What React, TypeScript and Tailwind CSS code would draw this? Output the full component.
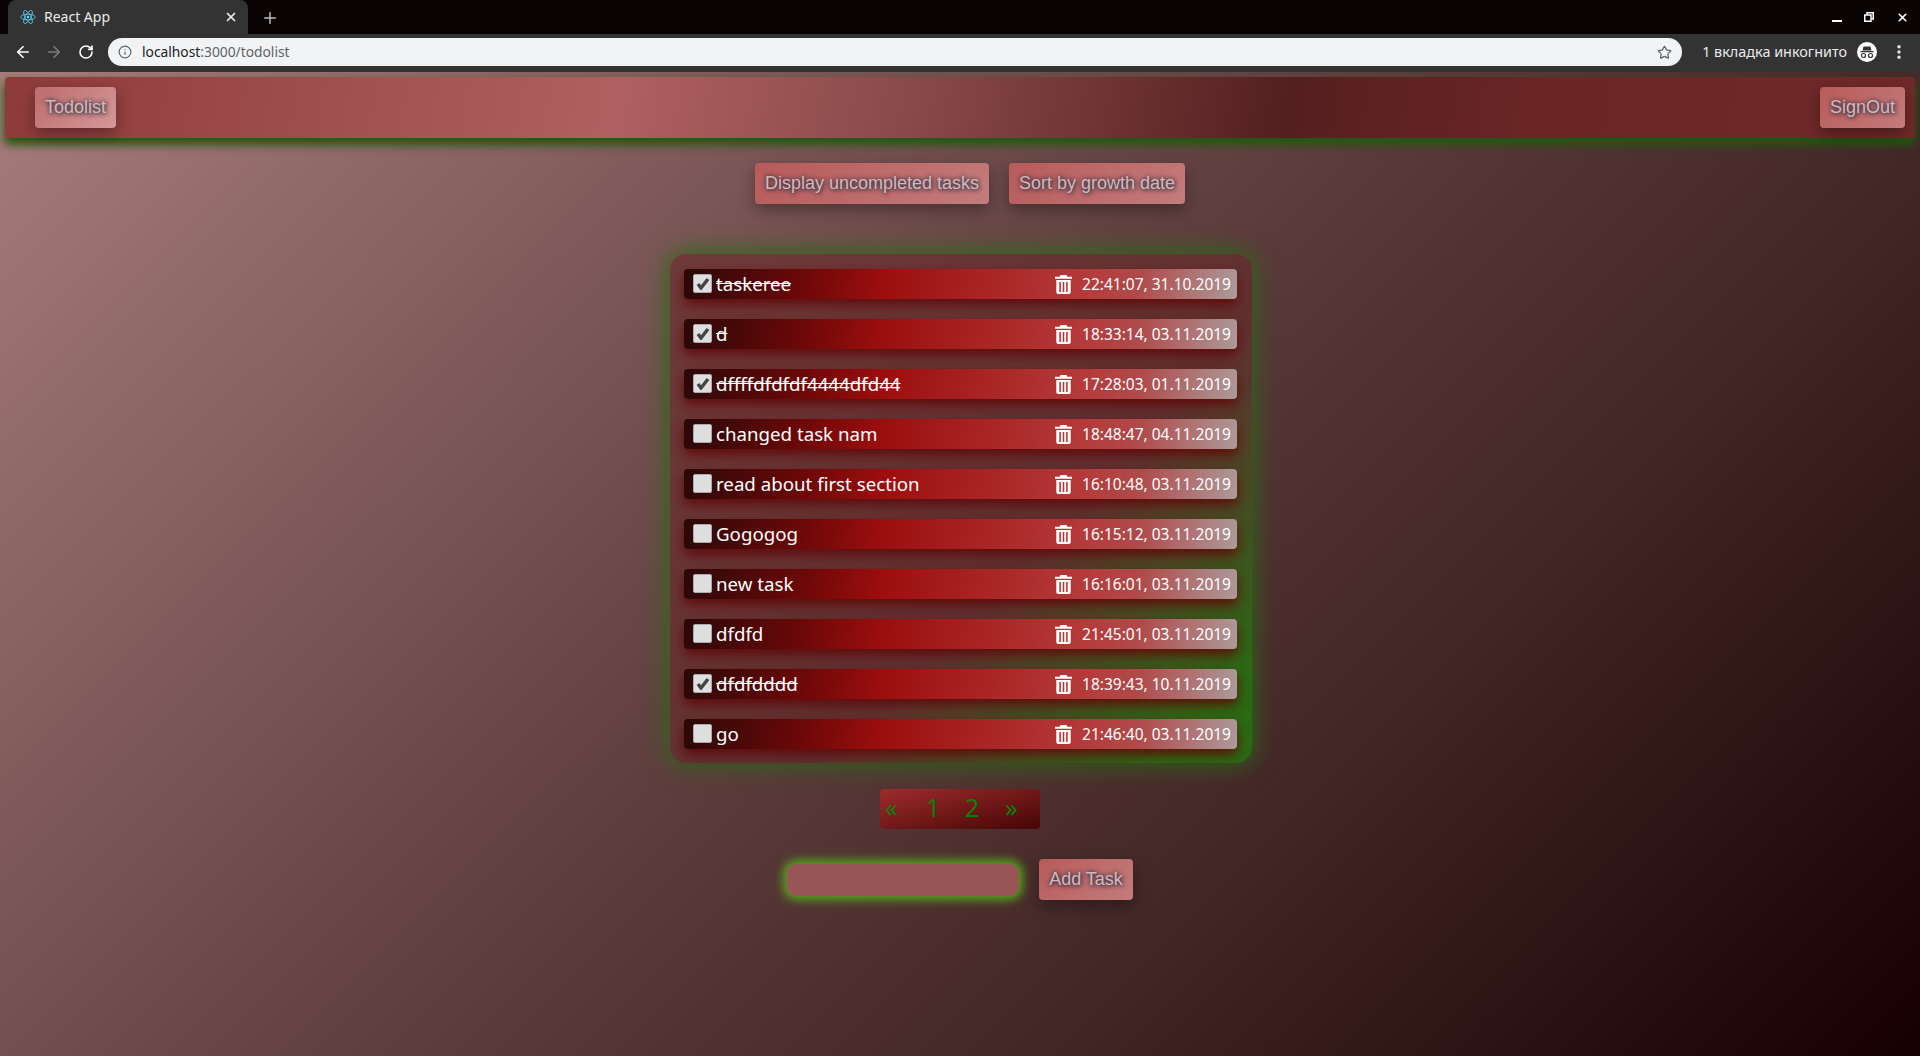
import { ArrowLeft, ArrowRight, Info, MoreVertical, Plus, RotateCw, Star, X } from 'lucide-react'

const tasks = [
  { title: 'taskeree', date: '22:41:07, 31.10.2019', done: true },
  { title: 'd', date: '18:33:14, 03.11.2019', done: true },
  { title: 'dffffdfdfdf4444dfd44', date: '17:28:03, 01.11.2019', done: true },
  { title: 'changed task nam', date: '18:48:47, 04.11.2019', done: false },
  { title: 'read about first section', date: '16:10:48, 03.11.2019', done: false },
  { title: 'Gogogog', date: '16:15:12, 03.11.2019', done: false },
  { title: 'new task', date: '16:16:01, 03.11.2019', done: false },
  { title: 'dfdfd', date: '21:45:01, 03.11.2019', done: false },
  { title: 'dfdfdddd', date: '18:39:43, 10.11.2019', done: true },
  { title: 'go', date: '21:46:40, 03.11.2019', done: false },
]

const btn =
  "h-[41px] px-[10px] rounded-[4px] font-['Liberation_Sans',sans-serif] text-[18px] text-[#d2b8bc] [text-shadow:0_0_5px_#334,1px_1px_4px_#334] shadow-[0_6px_16px_rgba(0,0,0,0.35)]"
const btnBg = 'bg-[linear-gradient(135deg,#b85a5a,#c47c7c)]'

const ReactLogo = () => (
  <svg width="16" height="16" viewBox="-12 -12 24 24" fill="none" stroke="#61dafb" strokeWidth="1.1">
    <circle r="2" fill="#61dafb" stroke="none" />
    <ellipse rx="11" ry="4.2" />
    <ellipse rx="11" ry="4.2" transform="rotate(60)" />
    <ellipse rx="11" ry="4.2" transform="rotate(120)" />
  </svg>
)

const Trash = () => (
  <svg width="17" height="19" viewBox="0 0 17 19" fill="#fff">
    <path d="M5.500 0h6l.8 1.700h4.700v2.100H0V1.700h4.700z" />
    <path
      fillRule="evenodd"
      d="M1.300 5h14.400v12.200a1.800 1.800 0 0 1-1.800 1.800H3.100a1.800 1.800 0 0 1-1.800-1.800zM4.300 7v10h1.600V7zM7.700 7v10h1.600V7zM11.100 7v10h1.600V7z"
    />
  </svg>
)

const Incognito = () => (
  <svg width="20" height="20" viewBox="0 0 20 20">
    <circle cx="10" cy="10" r="10" fill="#fff" />
    <path d="M6.500 4.500h7l1 4h-9zM3.500 9h13v1.200h-13z" fill="#333" />
    <circle cx="6.500" cy="13.500" r="2" fill="none" stroke="#333" strokeWidth="1.200" />
    <circle cx="13.500" cy="13.500" r="2" fill="none" stroke="#333" strokeWidth="1.200" />
  </svg>
)

const BrowserChrome = () => (
  <div className="font-['Noto_Sans',sans-serif]">
    <div className="h-[34px] bg-[#0a0304] flex items-end pl-2">
      <div className="h-[34px] w-[240px] bg-[#333333] rounded-t-[8px] flex items-center pl-[12px] pr-[10px] pb-[1px] text-[14px]">
        <ReactLogo />
        <span className="ml-[8px] flex-1 text-[#e8eaed]">React App</span>
        <X size={14} strokeWidth={3} className="text-[#e8eaed]" />
      </div>
      <Plus size={18} strokeWidth={2} className="text-[#bdbdbd] ml-[13px] mb-[7px]" />
      <div className="ml-auto flex items-center gap-[22px] h-[34px] pr-[11px] text-white">
        <div className="w-[10px] h-[2px] bg-white mt-[7px]" />
        <svg width="10" height="10" viewBox="0 0 10 10" fill="none" stroke="#fff" strokeWidth="1.500">
          <path d="M3 2.500V.750h6.250V7H7.500" />
          <rect x=".750" y="3" width="6.250" height="6.250" />
        </svg>
        <X size={13} strokeWidth={3} />
      </div>
    </div>
    <div className="h-[38px] bg-[#333333] flex items-center pl-[14px] pr-[12px] pb-[2px]">
      <ArrowLeft size={18} strokeWidth={2.200} className="text-white" />
      <ArrowRight size={18} strokeWidth={2.200} className="text-[#7c7c7c] ml-[13px]" />
      <RotateCw size={16} strokeWidth={2.400} className="text-white ml-[15px]" />
      <div className="ml-[14px] flex-1 h-[28px] bg-[#f1f3f4] rounded-full flex items-center pl-[10px] pr-[10px]">
        <Info size={14} strokeWidth={2} className="text-[#5f6368]" />
        <span className="ml-[10px] text-[13.800px] text-[#202124]">
          localhost<span className="text-[#5f6368]">:3000/todolist</span>
        </span>
        <Star size={15} strokeWidth={2} className="ml-auto text-[#5f6368]" />
      </div>
      <span className="ml-[20px] text-[14.400px] text-[#e8eaed]">1 вкладка инкогнито</span>
      <div className="ml-[10px]">
        <Incognito />
      </div>
      <MoreVertical size={18} strokeWidth={2.600} className="ml-[13px] text-[#e8eaed]" />
    </div>
  </div>
)

const TaskRow = ({ title, date, done }: { title: string; date: string; done: boolean }) => (
  <div className="h-[30px] rounded-[4px] flex items-center pl-[9px] pr-[6px] font-['Noto_Sans',sans-serif] text-white bg-[linear-gradient(100deg,#2a0808_0%,#6e0808_22%,#9c0e0e_36%,#b53a3a_72%,#b04a4a_82%,#ad9a9a_100%)] shadow-[0_6px_12px_rgba(95,5,5,0.85)]">
    <span className="w-[19px] h-[19px] mb-[2px] rounded-[2px] bg-[#dfdfdf] border border-[#ababab] flex items-center justify-center">
      {done && (
        <svg width="14" height="13" viewBox="0 0 14 13" fill="none" stroke="#444" strokeWidth="3.400">
          <path d="M2 7l3 4 7-9" />
        </svg>
      )}
    </span>
    <span className={`ml-[4px] text-[18.700px] leading-none flex-1 ${done ? 'line-through' : ''}`}>{title}</span>
    <Trash />
    <span className="ml-[10px] pt-[1px] text-[15.500px]">{date}</span>
  </div>
)

export default function App() {
  return (
    <div className="w-full h-[1056px] overflow-hidden flex flex-col">
      <BrowserChrome />
      <div className="flex-1 pt-[5px] bg-[linear-gradient(135deg,#a87c7c,#5a3a3a_50%,#422525_70%,#170000)]">
        <nav className="mx-[5px] h-[61px] rounded-[4px] flex items-center justify-between pl-[30px] pr-[10px] bg-[linear-gradient(100deg,#8f3a3a_0%,#b06060_32%,#8a4a4a_47%,#551f1f_67%,#6b2525_80%,#702a2a_100%)] shadow-[0_6px_10px_1px_#1f5a10]">
          <button className={`${btn} bg-[linear-gradient(135deg,#bd6c6c,#d59898)]`}>Todolist</button>
          <button className={`${btn} ${btnBg}`}>SignOut</button>
        </nav>
        <div className="mt-[25px] pl-[20px] flex justify-center gap-[20px]">
          <button className={`${btn} ${btnBg}`}>Display uncompleted tasks</button>
          <button className={`${btn} ${btnBg}`}>Sort by growth date</button>
        </div>
        <div className="mt-[50px] pl-[2px] flex justify-center">
          <div className="w-[582px] rounded-[16px] pt-[15px] pb-[14px] pl-[14px] pr-[15px] flex flex-col gap-[20px] bg-[linear-gradient(135deg,#703a3a_0%,#603030_60%,#2a6a14_92%,#2a6a14_100%)] shadow-[0_0_24px_2px_#2a6a18]">
            {tasks.map((t) => (
              <TaskRow key={t.title} {...t} />
            ))}
          </div>
        </div>
        <div className="mt-[26px] mx-auto w-[160px] h-[40px] rounded-[4px] flex items-center font-['Noto_Sans',sans-serif] text-[25px] leading-none pb-[3px] text-[#0a800a] bg-[linear-gradient(to_right_bottom,#a02c2c,#450505)]">
          <span className="w-[40px] pl-[5px]">«</span>
          <span className="w-[40px] pl-[6px]">1</span>
          <span className="w-[40px] pl-[5px]">2</span>
          <span className="w-[40px] pl-[5px]">»</span>
        </div>
        <div className="mt-[30px] flex justify-center items-center gap-[20px]">
          <input className="w-[232px] h-[32px] rounded-[10px] bg-[#985555] shadow-[0_0_10px_4px_#55a51c] outline-none" />
          <button className={`${btn} ${btnBg}`}>Add Task</button>
        </div>
      </div>
    </div>
  )
}
